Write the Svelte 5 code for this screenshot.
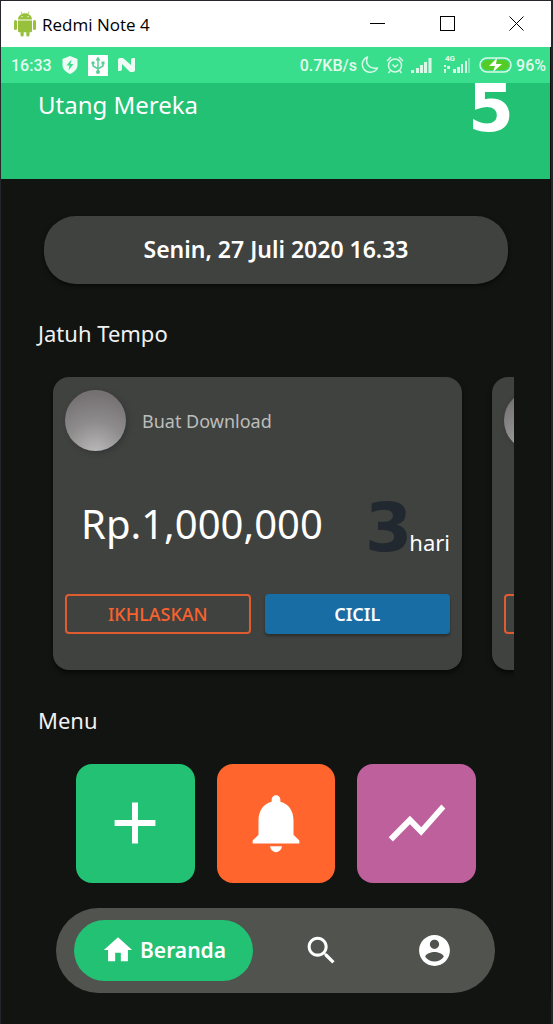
<script>
  const debts = [
    { name: 'Buat Download', amount: 'Rp.1,000,000', days: 3 },
    { name: 'Buat Download', amount: 'Rp.1,000,000', days: 3 }
  ];
</script>

<div class="window">
  <header class="titlebar">
    <svg class="robot" width="22" height="26" viewBox="0 0 22 26" aria-hidden="true">
      <g fill="#97c03d">
        <path d="M4 8.500C4 5.800 5.600 4 7.800 3L6.500 1l.5-.4L8.600 2.700c1.500-.5 3.300-.5 4.800 0L15 .6l.5.4-1.300 2C16.400 4 18 5.800 18 8.500z" />
        <path d="M4 9.500h14v10.500a1.300 1.300 0 0 1-1.300 1.300H5.300A1.300 1.300 0 0 1 4 20z" />
        <rect x="0" y="9" width="3" height="10" rx="1.500" />
        <rect x="19" y="9" width="3" height="10" rx="1.500" />
        <rect x="6.500" y="18" width="3.200" height="7.500" rx="1.500" />
        <rect x="12.300" y="18" width="3.200" height="7.500" rx="1.500" />
      </g>
      <circle cx="8" cy="5.600" r=".7" fill="#fff" />
      <circle cx="14" cy="5.600" r=".7" fill="#fff" />
    </svg>
    <span class="title">Redmi Note 4</span>
    <button aria-label="Minimize"><svg width="16" height="16" viewBox="0 0 16 16"><path d="M0 7.500h15" stroke="#000" /></svg></button>
    <button aria-label="Maximize"><svg width="16" height="16" viewBox="0 0 16 16"><rect x=".5" y=".5" width="14" height="14" fill="none" stroke="#000" /></svg></button>
    <button aria-label="Close"><svg width="16" height="16" viewBox="0 0 16 16"><path d="M.5.500l14 14M14.500.500l-14 14" stroke="#000" /></svg></button>
  </header>

  <div class="screen">
    <div class="status">
      <span class="clock">16:33</span>
      <svg width="16" height="18" viewBox="0 0 16 18" aria-hidden="true">
        <path d="M8 0l7.500 3v6c0 4-3 7-7.500 9C3.500 16 .5 13 .5 9V3z" fill="#effcf5" />
        <path d="M9.500 3.500L4.500 9.500h3l-1 5 5-6.500h-3z" fill="#38de8b" />
      </svg>
      <svg width="20" height="21" viewBox="0 0 20 21" aria-hidden="true">
        <rect width="20" height="21" fill="#fff" />
        <path d="M10 4v13M5 8v3l5 3 5-3V8" fill="none" stroke="#58cf98" stroke-width="1.500" />
        <path d="M10 1.500L7.500 5.500h5zM13.500 6.500h3v3h-3z" fill="#58cf98" />
        <circle cx="5" cy="8" r="1.700" fill="#58cf98" /><circle cx="10" cy="17" r="2" fill="#58cf98" />
      </svg>
      <svg width="18" height="14" viewBox="0 0 18 14" aria-hidden="true">
        <path d="M0 2Q0 0 2 0h3l8 7V2q0-2 2-2h2v12q0 2-2 2h-3L4 6v5q0 2-2 2H0z" fill="#effcf5" />
      </svg>
      <span class="speed">0.7KB/s</span>
      <svg width="18" height="18" viewBox="0 0 18 18" aria-hidden="true">
        <path d="M6.500 1C1.500 3 0 8.500 2.500 12.500c3 5 11 5 14-.5C9 13.500 3.500 8 6.500 1z" fill="none" stroke="#d9f9e8" stroke-width="1.500" stroke-linejoin="round" />
      </svg>
      <svg class="alarm" width="18" height="18" viewBox="0 0 18 18" aria-hidden="true">
        <g fill="none" stroke="#d9f9e8" stroke-width="1.500">
          <circle cx="9" cy="9.500" r="6.500" /><path d="M1 5l4-4M13 1l4 4M6.500 8.500L9 11l3-2.500M4 15l-1.500 2M14 15l1.500 2" />
        </g>
      </svg>
      <svg class="signal" width="22" height="16" viewBox="0 0 22 16" aria-hidden="true">
        <path d="M0 16v-3h3v3zM5 16v-5h3v5zM9 16V8h3v8zM13 16V5h3v11zM17.500 16V1h3v15z" fill="#d9f9e8" />
      </svg>
      <span class="mobile">
        <small>4G</small>
        <svg width="28" height="18" viewBox="0 0 28 18" aria-hidden="true">
          <path d="M1 9h2v2H1zM1 13h2v4H1zM4 10h3v3H4zM10 17v-4h3v4zM14 17v-6h3v6zM18 17V8h2v9zM22 17V5h2v12z" fill="#d9f9e8" />
          <path d="M25 17V2h2v15z" fill="#7aebb3" />
        </svg>
      </span>
      <svg class="battery" width="33" height="16" viewBox="0 0 33 16" aria-hidden="true">
        <rect x="1" y="1" width="31" height="14" rx="7" fill="none" stroke="#d9f9e8" stroke-width="1.500" />
        <rect x="3" y="3" width="27" height="10" rx="5" fill="#55cc25" />
        <path d="M18 1L10 9h6l-2 6 9-8h-6z" fill="#fff" />
      </svg>
      <span class="percent">96%</span>
    </div>

    <section class="hero">
      <span>Utang Mereka</span>
      <strong>5</strong>
    </section>

    <main>
      <div class="date">Senin, 27 Juli 2020 16.33</div>

      <h2>Jatuh Tempo</h2>
      <div class="cards">
        {#each debts as debt}
          <article class="card">
            <div class="person"><span class="avatar"></span><span>{debt.name}</span></div>
            <div class="figures">
              <span class="amount">{debt.amount}</span>
              <span class="due"><b>{debt.days}</b>hari</span>
            </div>
            <div class="actions">
              <button class="outline">IKHLASKAN</button>
              <button class="solid">CICIL</button>
            </div>
          </article>
        {/each}
      </div>

      <h2 class="menu-title">Menu</h2>
      <div class="tiles">
        <button class="tile green" aria-label="Tambah">
          <svg width="72" height="72" viewBox="0 0 24 24"><path d="M18.800 13h-5.800v5.800h-2V13H5.200v-2H11V5.200h2V11h5.800z" /></svg>
        </button>
        <button class="tile orange" aria-label="Notifikasi">
          <svg width="70" height="70" viewBox="0 0 24 24"><path d="M12 22c1.100 0 2-.9 2-2h-4c0 1.100.9 2 2 2zm6-6v-5c0-3.070-1.630-5.640-4.500-6.320V4c0-.83-.67-1.500-1.500-1.500s-1.500.67-1.500 1.500v.68C7.640 5.360 6 7.920 6 11v5l-2 2v1h16v-1z" /></svg>
        </button>
        <button class="tile purple" aria-label="Statistik">
          <svg width="68" height="68" viewBox="0 0 24 24"><path d="M3.500 18.490l6-6.010 4 4L22 6.920l-1.410-1.410-7.090 7.970-4-4L2 16.990z" /></svg>
        </button>
      </div>
    </main>

    <nav>
      <a class="active" href="#beranda">
        <svg width="34" height="34" viewBox="0 0 24 24" aria-hidden="true"><path d="M10 20v-6h4v6h5v-8h3L12 3 2 12h3v8z" /></svg>
        Beranda
      </a>
      <a href="#cari" aria-label="Cari">
        <svg width="37" height="37" viewBox="0 0 24 24"><path d="M15.500 14h-.79l-.28-.27C15.410 12.590 16 11.110 16 9.500 16 5.910 13.090 3 9.500 3S3 5.910 3 9.500 5.910 16 9.500 16c1.610 0 3.090-.59 4.230-1.570l.27.28v.79l5 4.990L20.490 19zm-6 0C7.010 14 5 11.990 5 9.500S7.010 5 9.500 5 14 7.010 14 9.500 11.990 14 9.500 14z" /></svg>
      </a>
      <a href="#akun" aria-label="Akun">
        <svg width="37" height="37" viewBox="0 0 24 24"><path d="M12 2C6.480 2 2 6.480 2 12s4.480 10 10 10 10-4.480 10-10S17.520 2 12 2zm0 3c1.660 0 3 1.340 3 3s-1.340 3-3 3-3-1.340-3-3 1.340-3 3-3zm0 14.200c-2.500 0-4.710-1.280-6-3.220.03-1.990 4-3.080 6-3.080 1.990 0 5.970 1.090 6 3.080-1.290 1.940-3.500 3.220-6 3.220z" /></svg>
      </a>
    </nav>
  </div>
</div>

<style>
  :global(body) { margin: 0; background: #121411; }
  * { box-sizing: border-box; }
  button { font: inherit; border: 0; padding: 0; cursor: pointer; }
  svg { display: block; flex: none; }
  .window {
    border: solid #25262c;
    border-width: 1px 2px 0 1px;
    min-height: 100vh;
    background: #121411;
    color: #fff;
    font-family: "Noto Sans", "Open Sans", sans-serif;
  }
  .titlebar {
    display: flex;
    align-items: center;
    height: 46px;
    padding-left: 13px;
    background: #fff;
    color: #000;
  }
  .title { flex: 1; margin-left: 6px; font: 17px "Open Sans", sans-serif; }
  .titlebar button { display: grid; place-items: center; width: 70px; height: 46px; background: none; }
  .titlebar button:last-child { width: 68px; }
  .screen { border-right: 1px solid #0b0c0a; }
  .status {
    display: flex;
    align-items: center;
    height: 36px;
    padding: 0 4px 0 10px;
    background: #38de8b;
    color: #e4faef;
    font: 500 16px Roboto, sans-serif;
  }
  .clock { margin-right: 10px; }
  .status svg + svg { margin-left: 10px; }
  .speed { margin-left: auto; margin-right: 4px; }
  .status .alarm { margin-left: 7px; }
  .status .signal { margin-left: 7px; }
  .mobile { position: relative; margin: 0 8px 0 10px; }
  .mobile small { position: absolute; top: -2px; left: 2px; font: bold 8px Roboto, sans-serif; }
  .percent { margin-left: 4px; }
  .hero {
    display: flex;
    justify-content: space-between;
    height: 96px;
    padding: 0 36px 0 37px;
    background: #22c173;
    font-size: 24px;
    line-height: 44px;
  }
  .hero strong { font: bold 66px/52px "DejaVu Sans", sans-serif; }
  main { padding: 37px 36px 0 37px; }
  .date {
    margin: 0 6px;
    padding-bottom: 1px;
    border-radius: 32px;
    background: #40423f;
    box-shadow: 0 2px 4px #0008;
    text-align: center;
    font-size: 23px;
    font-weight: 600;
    line-height: 67px;
  }
  h2 { margin: 33px 0 28px; font-size: 22px; font-weight: 400; line-height: 32px; color: #f1f1f1; }
  .cards { display: flex; gap: 30px; overflow: hidden; padding: 0 15px 8px; }
  .card {
    flex: none;
    width: calc(100% - 37px);
    padding: 13px 12px 36px;
    border-radius: 16px;
    background: #40423f;
    box-shadow: 0 3px 5px #0008;
  }
  .person { display: flex; align-items: center; gap: 16px; font-size: 18px; color: #bcbdbb; }
  .avatar {
    width: 61px;
    height: 61px;
    border-radius: 50%;
    background: radial-gradient(circle at 50% 105%, #bdbbbc, #8f8c8d 45%, #757172 85%);
    box-shadow: 2px 2px 5px #252b2e88;
  }
  .figures { display: flex; justify-content: space-between; align-items: flex-start; height: 56px; margin: 49px 0 38px; padding-left: 16px; }
  .amount { font-size: 40px; line-height: 48px; }
  .due { display: flex; align-items: baseline; font-size: 22px; line-height: 26px; }
  .due b { margin-right: -3px; font: bold 68px/56px "DejaVu Sans", sans-serif; color: #22282f; }
  .actions { display: grid; grid-template-columns: 1fr 1fr; gap: 14px; }
  .actions button { height: 40px; border-radius: 4px; font-size: 18px; font-weight: 500; color: #fff; }
  .actions .outline { border: 2px solid #df5c30; background: none; color: #f9622e; }
  .actions .solid { background: #196da5; box-shadow: 0 2px 3px #0005; font-weight: 600; }
  .menu-title { margin-top: 26px; }
  .tiles { display: grid; grid-template-columns: repeat(3, 1fr); gap: 22px; padding: 0 38px; }
  .tile { display: grid; place-items: center; aspect-ratio: 1; border-radius: 16px; }
  .tile svg, nav svg { fill: #fff; }
  .green { background: #22c173; }
  .orange { background: #ff652d; }
  .purple { background: #be609c; }
  nav {
    display: grid;
    grid-template-columns: 191fr 113fr 113fr;
    margin: 25px 55px 30px;
    padding: 12px 4px 12px 18px;
    border-radius: 43px;
    background: #51534f;
  }
  nav a {
    display: flex;
    align-items: center;
    justify-content: center;
    height: 61px;
    color: #fff;
    text-decoration: none;
    font-size: 21px;
    font-weight: 600;
  }
  nav .active { gap: 5px; margin-right: 12px; border-radius: 31px; background: #22c173; }
</style>
